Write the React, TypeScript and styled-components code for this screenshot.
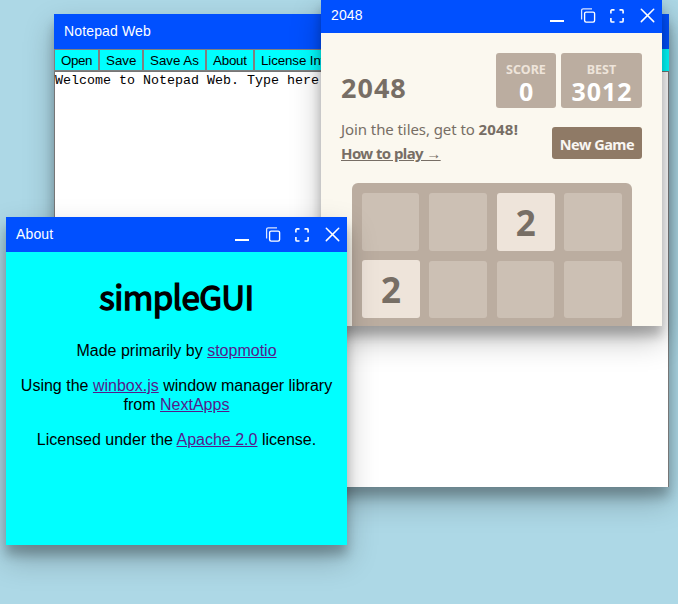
import React from "react";
import styled, { createGlobalStyle } from "styled-components";

const GlobalStyle = createGlobalStyle`
  html, body { margin: 0; padding: 0; }
  body { overflow: hidden; background: lightblue; font-family: "Liberation Sans", Arial, sans-serif; }
`;

const Desktop = styled.main`
  position: relative;
  width: 100vw;
  height: 100vh;
  overflow: hidden;
  background: lightblue;
`;

const WindowFrame = styled.section<{ $x: number; $y: number; $w: number; $h: number }>`
  position: absolute;
  left: ${(p) => p.$x}px;
  top: ${(p) => p.$y}px;
  width: ${(p) => p.$w}px;
  height: ${(p) => p.$h}px;
  display: flex;
  flex-direction: column;
  background: #0050ff;
  box-shadow: 0 14px 28px rgba(0, 0, 0, 0.25), 0 10px 10px rgba(0, 0, 0, 0.22);
`;

const TitleBar = styled.header`
  flex: none;
  display: flex;
  justify-content: space-between;
  height: 35px;
  padding-left: 10px;
  color: #fff;
  font-size: 14px;
  line-height: 35px;
  letter-spacing: 0.14px;
`;

const Controls = styled.div`
  display: flex;
`;

const Control = styled.span`
  display: flex;
  align-items: center;
  justify-content: center;
  width: 30px;
  height: 35px;
`;

const Body = styled.div<{ $bg: string }>`
  flex: 1;
  min-height: 0;
  overflow: hidden;
  background: ${(p) => p.$bg};
`;

const MinIcon = () => (
  <svg width="30" height="35" viewBox="0 0 30 35">
    <rect x="8" y="22" width="14" height="2" fill="#fff" />
  </svg>
);
const MaxIcon = () => (
  <svg width="30" height="35" viewBox="0 0 30 35" fill="none" stroke="#fff">
    <rect x="12.6" y="14.1" width="10" height="10" rx="1.5" strokeWidth="1.35" />
    <path d="M9.6 21.5V12.4a1.6 1.6 0 0 1 1.6-1.6H20" strokeWidth="1.25" opacity=".85" />
  </svg>
);
const FullIcon = () => (
  <svg width="30" height="35" viewBox="0 0 30 35" fill="none" stroke="#fff" strokeWidth="1.6">
    <path d="M8.9 15.5V13a1.1 1.1 0 0 1 1.1-1.1h2.5M17.5 11.9H20a1.1 1.1 0 0 1 1.1 1.1v2.5M21.1 20v2.9a1.1 1.1 0 0 1-1.1 1.1h-2.5M12.5 24H10a1.1 1.1 0 0 1-1.1-1.1V20" />
  </svg>
);
const CloseIcon = () => (
  <svg width="30" height="35" viewBox="0 0 30 35" fill="none" stroke="#fff" strokeWidth="1.5" strokeLinecap="round">
    <path d="M9.3 11.2 21.7 23.6M21.7 11.2 9.3 23.6" />
  </svg>
);

type WindowProps = {
  title: string;
  x: number;
  y: number;
  w: number;
  h: number;
  bg: string;
  children: React.ReactNode;
};

const Window = ({ title, x, y, w, h, bg, children }: WindowProps) => (
  <WindowFrame $x={x} $y={y} $w={w} $h={h}>
    <TitleBar>
      <span>{title}</span>
      <Controls>
        <Control><MinIcon /></Control>
        <Control><MaxIcon /></Control>
        <Control><FullIcon /></Control>
        <Control><CloseIcon /></Control>
      </Controls>
    </TitleBar>
    <Body $bg={bg}>{children}</Body>
  </WindowFrame>
);

const Notepad = styled.div`
  display: flex;
  flex-direction: column;
  height: 100%;
`;

const MenuBar = styled.nav`
  flex: none;
  display: flex;
  height: 22px;
  background: #00ffff;
`;

const MenuButton = styled.button<{ $w: number; $spacing: number }>`
  flex: none;
  box-sizing: border-box;
  width: ${(p) => p.$w}px;
  height: 22px;
  padding: 0 6px;
  border: 1px solid gray;
  background: #00ffff;
  color: #000;
  font: 13.333px "Liberation Sans", Arial, sans-serif;
  letter-spacing: ${(p) => p.$spacing}px;
  text-align: left;
  white-space: nowrap;
`;

const Editor = styled.div`
  flex: 1;
  border: 1px solid #767676;
  border-bottom: 0;
  background: #fff;
  color: #000;
  font: 13.333px/15px "Liberation Mono", monospace;
  white-space: pre;
  padding-top: 1px;
`;

const Game = styled.div`
  padding: 20px;
  color: #776e65;
  font-family: "Noto Sans", sans-serif;
`;

const GameTop = styled.div`
  display: flex;
  justify-content: space-between;
  height: 55px;
`;

const GameTitle = styled.h1`
  margin: 15px 0 0;
  font-size: 27px;
  line-height: 40px;
  font-weight: 700;
  letter-spacing: 1px;
`;

const Scores = styled.div`
  display: flex;
  gap: 5px;
`;

const ScoreBox = styled.div<{ $w: number }>`
  box-sizing: border-box;
  width: ${(p) => p.$w}px;
  height: 55px;
  padding-top: 9px;
  border-radius: 3px;
  background: #bbada0;
  text-align: center;
  color: #fff;
  font-weight: 700;
`;

const ScoreLabel = styled.div`
  color: #eee4da;
  font-size: 12.5px;
  line-height: 16px;
`;

const ScoreValue = styled.div`
  padding-left: 1px;
  font-size: 25px;
  line-height: 27px;
  letter-spacing: 0.9px;
`;

const Intro = styled.div`
  display: flex;
  justify-content: space-between;
  height: 75px;
`;

const IntroText = styled.p`
  margin: 9px 0 0;
  font-size: 15px;
  line-height: 24px;
  letter-spacing: -0.08px;
  white-space: nowrap;
`;

const Goal = styled.strong`
  letter-spacing: 0.2px;
`;

const HowTo = styled.a`
  font-weight: 700;
  letter-spacing: -0.6px;
  text-decoration: underline;
`;

const NewGame = styled.div`
  width: 90px;
  height: 32px;
  margin-top: 19px;
  border-radius: 3px;
  background: #8f7a66;
  color: #f9f6f2;
  font-size: 14.5px;
  line-height: 35px;
  font-weight: 700;
  letter-spacing: -0.5px;
  text-align: center;
  white-space: nowrap;
`;

const Board = styled.div`
  display: grid;
  grid-template-columns: repeat(4, 57.4px);
  grid-auto-rows: 57.5px;
  gap: 10px;
  box-sizing: border-box;
  width: 280px;
  height: 280px;
  margin-left: 11px;
  padding: 10px;
  border-radius: 6px;
  background: #bbada0;
`;

const Cell = styled.div<{ $filled: boolean }>`
  width: ${(p) => (p.$filled ? 58 : 57.4)}px;
  height: ${(p) => (p.$filled ? 58 : 57.5)}px;
  margin-top: ${(p) => (p.$filled ? -0.5 : 0)}px;
  border-radius: 3px;
  background: ${(p) => (p.$filled ? "#eee4da" : "rgba(238, 228, 218, 0.35)")};
  font-size: 35px;
  line-height: 60px;
  font-weight: 700;
  text-align: center;
`;

const About = styled.div`
  padding: 24px 7px 0;
  text-align: center;
  font-size: 16px;
  line-height: 19px;
  color: #000;
`;

const AboutTitle = styled.h1`
  margin: 0 0 21px;
  font: 400 33px/44px "Noto Sans CJK SC", sans-serif;
  letter-spacing: -0.55px;
  -webkit-text-stroke: 1.4px #000;
  transform: translateY(-2px);
`;

const AboutText = styled.p`
  margin: 0 0 16px;
`;

const Link = styled.a`
  color: #551a8b;
  text-decoration: underline;
`;

const menu = [
  { label: "Open", width: 45, spacing: -0.4 },
  { label: "Save", width: 44, spacing: 0 },
  { label: "Save As", width: 63, spacing: 0 },
  { label: "About", width: 48, spacing: -0.2 },
  { label: "License Info", width: 87, spacing: -0.1 },
];
const tiles = [0, 0, 2, 0, 2, 0, 0, 0];

export default function App() {
  return (
    <>
      <GlobalStyle />
      <Desktop>
        <Window title="Notepad Web" x={54} y={14} w={615} h={473} bg="#00ffff">
          <Notepad>
            <MenuBar>
              {menu.map((m) => (
                <MenuButton key={m.label} $w={m.width} $spacing={m.spacing}>{m.label}</MenuButton>
              ))}
            </MenuBar>
            <Editor>Welcome to Notepad Web. Type here</Editor>
          </Notepad>
        </Window>
        <Window title="2048" x={321} y={-2} w={341} h={328} bg="#fbf8ef">
          <Game>
            <GameTop>
              <GameTitle>2048</GameTitle>
              <Scores>
                <ScoreBox $w={60}>
                  <ScoreLabel>SCORE</ScoreLabel>
                  <ScoreValue>0</ScoreValue>
                </ScoreBox>
                <ScoreBox $w={81}>
                  <ScoreLabel>BEST</ScoreLabel>
                  <ScoreValue>3012</ScoreValue>
                </ScoreBox>
              </Scores>
            </GameTop>
            <Intro>
              <IntroText>
                Join the tiles, get to <Goal>2048!</Goal>
                <br />
                <HowTo>How to play →</HowTo>
              </IntroText>
              <NewGame>New Game</NewGame>
            </Intro>
            <Board>
              {tiles.map((v, i) => <Cell key={i} $filled={v > 0}>{v || ""}</Cell>)}
            </Board>
          </Game>
        </Window>
        <Window title="About" x={6} y={217} w={341} h={328} bg="#00ffff">
          <About>
            <AboutTitle>simpleGUI</AboutTitle>
            <AboutText>Made primarily by <Link>stopmotio</Link></AboutText>
            <AboutText>
              Using the <Link>winbox.js</Link> window manager library from <Link>NextApps</Link>
            </AboutText>
            <AboutText>Licensed under the <Link>Apache 2.0</Link> license.</AboutText>
          </About>
        </Window>
      </Desktop>
    </>
  );
}
